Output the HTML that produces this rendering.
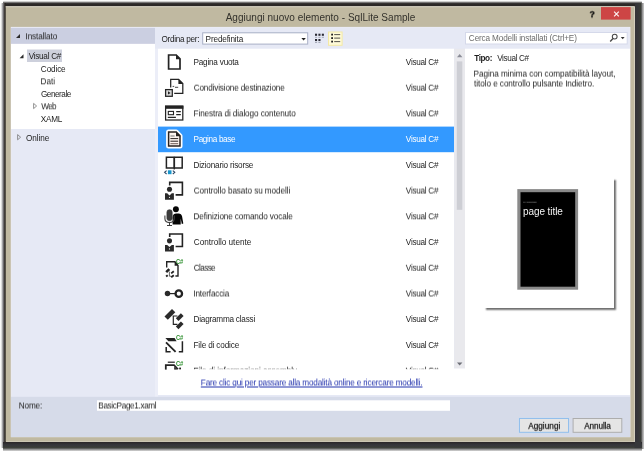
<!DOCTYPE html>
<html lang="it">
<head>
<meta charset="utf-8">
<title>Aggiungi nuovo elemento - SqlLite Sample</title>
<style>

*{box-sizing:border-box;margin:0;padding:0}
html,body{width:644px;height:451px;overflow:hidden;background:#fff}
body{position:relative;font-family:"Liberation Sans",sans-serif;font-size:8px;color:#1e1e1e}
.b{position:absolute}
.t{position:absolute;white-space:nowrap;display:block;transform-origin:0 0}
svg{position:absolute;overflow:visible}
#win{position:absolute;left:0;top:0;width:644px;height:451px;will-change:transform}

</style>
</head>
<body>
<div id="win">
<div class="b" style="left:2.6px;top:0px;width:639.0px;height:7px;background:linear-gradient(to bottom,#ffffff 0,#f4f5f4 1px,#a6a6a6 2px,#504e4e 2.9px,#322f2f 3.6px,#2a2726 4.6px,#2a2726 7px);border-radius:2px 2px 0 0"></div>
<div class="b" style="left:0px;top:2.6px;width:5.8px;height:445.8px;background:linear-gradient(to right,#ffffff 0,#f4f5f4 1px,#c4c4c4 2px,#85848a 3px,#54504f 4px,#2b2723 5px,#2b2723 5.8px);border-radius:2px 0 0 2px"></div>
<div class="b" style="left:634.6px;top:3.2px;width:9.4px;height:445.8px;background:linear-gradient(to right,#333337 0,#35363a 3px,#3a3d36 5.6px,#5e5e5e 6.6px,#a8a8a8 7.8px,#d2d2d2 9.4px);"></div>
<div class="b" style="left:3.2px;top:441.7px;width:639.2px;height:9.3px;background:linear-gradient(to bottom,#2a2627 0,#37373c 3px,#3a3d37 5.4px,#6a6a6a 6.8px,#b4b4b4 8px,#dadada 9.3px);"></div>
<svg width="644" height="451" viewBox="0 0 644 451" style="left:0;top:0"><rect x="634.6" y="441.7" width="6.6" height="6.3" fill="#36373a"/><rect x="5.7" y="6.2" width="629.0" height="435.6" fill="#c0b9a1"/><rect x="5.7" y="6.2" width="629.0" height="1.1" fill="#d2cec0"/><rect x="601" y="7.1" width="29.6" height="12.5" fill="#cd4545"/><rect x="11.3" y="27.4" width="618.6" height="409.3" fill="#e6e9f5" stroke="#edeef9" stroke-width="1"/><rect x="11" y="27.9" width="144" height="16.0" fill="#cbcfe1"/><rect x="11" y="43.9" width="144" height="85.1" fill="#ffffff"/><rect x="155" y="48.6" width="3" height="348.4" fill="#eceef8"/><rect x="27" y="49.5" width="35" height="12.5" fill="#cdd0dc"/><rect x="158" y="48.7" width="296" height="346.3" fill="#ffffff"/><rect x="158" y="126.6" width="296" height="25.6" fill="#3399ff"/><rect x="454.3" y="48.7" width="10.7" height="319.8" fill="#e9e9ed"/><rect x="456.8" y="61.4" width="5.5" height="148.4" fill="#cdced4"/><rect x="454" y="368.5" width="11" height="26.5" fill="#ffffff"/><rect x="465" y="48.7" width="165" height="346.3" fill="#ffffff"/><rect x="11" y="396.8" width="619" height="40.2" fill="#d6dbe9"/><rect x="97" y="400.3" width="353" height="10.5" fill="#ffffff"/><rect x="518.6" y="417.6" width="50.8" height="15.6" fill="#c9def3"/><rect x="519.5" y="418.5" width="49" height="13.8" fill="#e5e5e5" stroke="#93bfec" stroke-width="1"/><rect x="573.1" y="418.5" width="48.7" height="13.8" fill="#e5e5e5" stroke="#adadad" stroke-width="1"/><rect x="202.7" y="32.8" width="105.0" height="11.3" fill="#ffffff" stroke="#a8b0c6" stroke-width="1"/><rect x="465.5" y="32.5" width="161.7" height="11.5" fill="#ffffff" stroke="#d5d9ea" stroke-width="1"/><rect x="328.5" y="32.0" width="13.6" height="13.3" fill="#fefad9" stroke="#f4e9a4" stroke-width="1"/></svg>
<div class="b" style="left:483.5px;top:177.5px;width:130.1px;height:130.1px;background:#ffffff;box-shadow:2px 2px 1.6px 0 rgba(0,0,0,.55)"></div>
<svg width="644" height="451" viewBox="0 0 644 451" style="left:0;top:0"><rect x="517.3" y="189.1" width="60.8" height="100.6" fill="#8a8a8a"/><rect x="520.5" y="192.2" width="54.7" height="94.5" fill="#000000"/></svg>
<svg width="644" height="451" viewBox="0 0 644 451" style="left:0;top:0">
<path d="M168.6 55 H176.2 L180 58.9 V69 H168.6 Z" fill="none" stroke="#232323" stroke-width="1.7" />
<path d="M176 54.6 L180.6 59.3 H176 Z" fill="#232323" stroke="none" stroke-width="1.3" />
<path d="M170.7 87.6 V79.4 H178.6 L182.8 83.6 V93.3 H174.2" fill="none" stroke="#232323" stroke-width="1.25" />
<path d="M178.4 79 L183.2 83.9 H178.4 Z" fill="#232323" stroke="none" stroke-width="1.3" />
<path d="M172.6 86.4 h1.6 M175 87.3 h3.2" fill="none" stroke="#333" stroke-width="0.9" />
<rect x="165.6" y="89.6" width="6.7" height="6.7" fill="#d9d9d9" stroke="#232323" stroke-width="1.25" />
<path d="M168 91.2 L170.6 92.9 L168 94.6 Z" fill="#232323" stroke="none" stroke-width="1.3" />
<rect x="165.6" y="106.2" width="17.2" height="13.8" fill="#fff" stroke="#232323" stroke-width="1.25" />
<rect x="165" y="105.6" width="18.4" height="3.2" fill="#232323" stroke="none" stroke-width="0" />
<rect x="168.3" y="111.4" width="5.2" height="3.3" fill="#fff" stroke="#232323" stroke-width="1.1" />
<path d="M176.2 111.6 H180.8 M176.2 114.6 H180.8 M167.8 117.4 H175.9" fill="none" stroke="#232323" stroke-width="1.1" />
<path d="M168.6 132 H176.2 L180 135.9 V146 H168.6 Z" fill="#fff" stroke="#ffffff" stroke-width="5" stroke-linejoin="round"/>
<path d="M168.6 132 H176.2 L180 135.9 V146 H168.6 Z" fill="#fdf3ee" stroke="#2a2320" stroke-width="1.5" />
<path d="M176 131.6 L180.6 136.3 H176 Z" fill="#2a2320" stroke="none" stroke-width="1.3" />
<path d="M170.4 136 H174.6" fill="none" stroke="#8a8a8a" stroke-width="1.2" />
<path d="M170.4 138.6 H178.2 M170.4 141.2 H178.2" fill="none" stroke="#2a2320" stroke-width="1.0" />
<path d="M170.4 143.7 H178.2" fill="none" stroke="#6d5a55" stroke-width="1.0" />
<path d="M166.4 157.2 H174.3 V168.1 H166.4 Z M174.3 157.2 H182.2 V168.1 H174.3 Z" fill="none" stroke="#232323" stroke-width="1.5" />
<path d="M174.3 156.8 V169.4" fill="none" stroke="#232323" stroke-width="1.5" />
<rect x="167.9" y="170.3" width="3.6" height="3.9" fill="#1794cb" stroke="none" stroke-width="0" />
<path d="M166.6 170.6 L164.6 172.3 L166.6 174 M172.8 170.6 L174.8 172.3 L172.8 174" fill="none" stroke="#2d4866" stroke-width="1.1" />
<path d="M169.7 185.5 V182.4 H182.4 V194.9 H175.6" fill="none" stroke="#232323" stroke-width="1.6" />
<circle cx="169.5" cy="189.25" r="2.55" fill="#2b2b2b" stroke="none" stroke-width="0"/>
<path d="M165 193.3 H167.2 L169.5 195.4 L171.8 193.3 H173.9 V199.8 H165 Z" fill="#2b2b2b" stroke="none" stroke-width="1.3" />
<circle cx="169.5" cy="197.3" r="0.6" fill="#fff" stroke="none" stroke-width="0"/>
<path d="M169.7 237.1 V234.0 H182.4 V246.5 H175.6" fill="none" stroke="#232323" stroke-width="1.6" />
<circle cx="169.5" cy="240.85" r="2.55" fill="#2b2b2b" stroke="none" stroke-width="0"/>
<path d="M165 244.9 H167.2 L169.5 247.0 L171.8 244.9 H173.9 V251.4 H165 Z" fill="#2b2b2b" stroke="none" stroke-width="1.3" />
<circle cx="169.5" cy="248.9" r="0.6" fill="#fff" stroke="none" stroke-width="0"/>
<circle cx="175.9" cy="209.2" r="2.95" fill="#050505" stroke="none" stroke-width="0"/>
<path d="M172.6 224.4 V217.5 Q172.6 213.6 176.5 213.6 H178.6 Q181.4 213.6 182.1 216.6 L183.3 223.6 L181.8 224 L180.7 218.4 V224.4 Z" fill="#050505" stroke="none" stroke-width="1.3" />
<rect x="166.9" y="209.7" width="5.3" height="11.0" fill="#3c3c3c" stroke="#333" stroke-width="0.6" rx="2.4"/>
<path d="M164.9 215.6 V218.6 Q164.9 222.6 169.5 222.6 Q174.2 222.6 174.2 218.6 V215.6" fill="none" stroke="#444" stroke-width="1.1" />
<path d="M169.5 222.6 V225.3 M167 225.5 H172" fill="none" stroke="#3a3a3a" stroke-width="1.0" />
<path d="M166.7 267.4 V261.7 H174.9 L178 265.4 V276 H175.4" fill="none" stroke="#232323" stroke-width="1.4" />
<path d="M174.6 261.3 L178.4 265.8 H174.6 Z" fill="#232323" stroke="none" stroke-width="1.3" />
<path d="M165.3 271.3 L168.4 268.3 L170.2 270.1 L167.1 273.1 Z M170.6 272.7 L173.2 270.6 L174.4 272 L171.8 274.1 Z M170.6 276.6 L173.2 274.5 L174.4 275.9 L171.8 278 Z M165.5 275.7 l1.6 -1.2 l1.2 1.5 l-1.6 1.2 Z" fill="#232323" stroke="none" stroke-width="1.3" />
<path d="M169.4 271.6 V276.2 H171" fill="none" stroke="#232323" stroke-width="0.7" />
<text x="176.0" y="263.5" font-family="Liberation Sans, sans-serif" font-size="6.6" font-weight="bold" fill="#2f902f" textLength="7.3" lengthAdjust="spacingAndGlyphs">C#</text>
<circle cx="167.5" cy="293.6" r="2.75" fill="#2b2b2b" stroke="none" stroke-width="0"/>
<path d="M169.5 293.6 H175" fill="none" stroke="#232323" stroke-width="1.2" />
<circle cx="178.8" cy="293.7" r="3.25" fill="#fff" stroke="#232323" stroke-width="2.3"/>
<path d="M164.5 316.4 L172.0 308.9 L175.3 312.2 L167.8 319.7 Z" fill="#2b2b2b" stroke="none" stroke-width="1.3" />
<path d="M175.8 318.3 L180.9 313.2 L183.6 315.9 L178.5 321.0 Z" fill="#2b2b2b" stroke="none" stroke-width="1.3" />
<path d="M175.8 326.5 L180.9 321.4 L183.6 324.1 L178.5 329.2 Z" fill="#2b2b2b" stroke="none" stroke-width="1.3" />
<path d="M172.6 316 H177.4 M173.3 316 V324.3 H177.4" fill="none" stroke="#232323" stroke-width="1.15" />
<path d="M165.4 338.1 H174.6 L176.6 341.2 H168.4 Z" fill="#232323" stroke="none" stroke-width="1.3" />
<path d="M166 342.4 L175.6 351.8" fill="none" stroke="#232323" stroke-width="1.85" />
<path d="M166.2 347 V351.7 H170.6" fill="none" stroke="#232323" stroke-width="1.5" />
<path d="M182.4 341.2 V351.7 H178.8" fill="none" stroke="#232323" stroke-width="1.5" />
<text x="176.0" y="340.3" font-family="Liberation Sans, sans-serif" font-size="6.6" font-weight="bold" fill="#2f902f" textLength="7.3" lengthAdjust="spacingAndGlyphs">C#</text>
<path d="M167.8 362.2 H174.8" fill="none" stroke="#232323" stroke-width="1.2" />
<path d="M165.8 370 V365 H174 L178 369.4" fill="none" stroke="#232323" stroke-width="1.75" />
<path d="M174.2 366.6 L177.4 370 H174.2 Z" fill="#232323" stroke="none" stroke-width="1.3" />
<rect x="179.2" y="367.6" width="1.8" height="2.0" fill="#232323" stroke="none" stroke-width="0" />
<text x="176.0" y="366.1" font-family="Liberation Sans, sans-serif" font-size="6.6" font-weight="bold" fill="#2f902f" textLength="7.3" lengthAdjust="spacingAndGlyphs">C#</text>
<path d="M20 34 V38 H16 Z" fill="#2b2b2b" stroke="none" stroke-width="1.3" />
<path d="M23.5 54.3 V58.2 H19.6 Z" fill="#2b2b2b" stroke="none" stroke-width="1.3" />
<path d="M33.6 103.4 L36.6 106 L33.6 108.6 Z" fill="#fff" stroke="#777" stroke-width="0.8" />
<path d="M17.6 134.6 L20.6 137.2 L17.6 139.8 Z" fill="#e6e9f5" stroke="#777" stroke-width="0.8" />
<path d="M301.4 38 H305.8 L303.6 40.6 Z" fill="#222" stroke="none" stroke-width="1.3" />
<rect x="315" y="33.7" width="2.1" height="2.1" fill="#2a2a35" stroke="none" stroke-width="0" />
<rect x="315" y="36.9" width="2.1" height="0.6" fill="#7a7f90" stroke="none" stroke-width="0" />
<rect x="318.4" y="33.7" width="2.1" height="2.1" fill="#2a2a35" stroke="none" stroke-width="0" />
<rect x="318.4" y="36.9" width="2.1" height="0.6" fill="#7a7f90" stroke="none" stroke-width="0" />
<rect x="321.8" y="33.7" width="2.1" height="2.1" fill="#2a2a35" stroke="none" stroke-width="0" />
<rect x="321.8" y="36.9" width="2.1" height="0.6" fill="#7a7f90" stroke="none" stroke-width="0" />
<rect x="315" y="39" width="2.1" height="2.1" fill="#2a2a35" stroke="none" stroke-width="0" />
<rect x="315" y="42.2" width="2.1" height="0.6" fill="#7a7f90" stroke="none" stroke-width="0" />
<rect x="318.4" y="39" width="2.1" height="2.1" fill="#2a2a35" stroke="none" stroke-width="0" />
<rect x="318.4" y="42.2" width="2.1" height="0.6" fill="#7a7f90" stroke="none" stroke-width="0" />
<rect x="331.2" y="33.7" width="1.8" height="1.8" fill="#1e1e1e" stroke="none" stroke-width="0" />
<rect x="334.2" y="34.1" width="6.0" height="1.0" fill="#55534a" stroke="none" stroke-width="0" />
<rect x="331.2" y="37.2" width="1.8" height="1.8" fill="#1e1e1e" stroke="none" stroke-width="0" />
<rect x="334.2" y="37.6" width="6.0" height="1.0" fill="#55534a" stroke="none" stroke-width="0" />
<rect x="331.2" y="40.7" width="1.8" height="1.8" fill="#1e1e1e" stroke="none" stroke-width="0" />
<rect x="334.2" y="41.1" width="6.0" height="1.0" fill="#55534a" stroke="none" stroke-width="0" />
<circle cx="614.7" cy="36.6" r="2.4" fill="#fff" stroke="#474747" stroke-width="1.05"/>
<path d="M613 38.5 L610.2 41.5" fill="none" stroke="#474747" stroke-width="1.45" />
<path d="M620.8 37.1 H624.6 L622.7 39.3 Z" fill="#333" stroke="none" stroke-width="1.3" />
<path d="M457 57.2 L459.7 54 L462.4 57.2 Z" fill="#8a8c96" stroke="none" stroke-width="1.3" />
<path d="M457 362.4 L459.7 365.6 L462.4 362.4 Z" fill="#6e7078" stroke="none" stroke-width="1.3" />
<path d="M614.1 11.6 L618.8 16.3 M618.8 11.6 L614.1 16.3" fill="none" stroke="#fdf3f3" stroke-width="1.2" />
</svg>
<div class="t" style="left:193px;top:58px;text-indent:0.52px;font-size:8.2px;line-height:10.25px;letter-spacing:-0.217px;">Pagina vuota</div>
<div class="t" style="left:405px;top:58px;text-indent:0.85px;font-size:8.2px;line-height:10.25px;letter-spacing:-0.281px;">Visual C#</div>
<div class="t" style="left:193px;top:82px;text-indent:0.76px;transform:translate3d(0,1.63px,0) rotateX(0.01deg);font-size:8.2px;line-height:10.25px;letter-spacing:-0.172px;">Condivisione destinazione</div>
<div class="t" style="left:405px;top:82px;text-indent:0.85px;transform:translate3d(0,1.63px,0) rotateX(0.01deg);font-size:8.2px;line-height:10.25px;letter-spacing:-0.281px;">Visual C#</div>
<div class="t" style="left:193px;top:108px;text-indent:0.52px;transform:translate3d(0,1.36px,0) rotateX(0.01deg);font-size:8.2px;line-height:10.25px;letter-spacing:-0.103px;">Finestra di dialogo contenuto</div>
<div class="t" style="left:405px;top:108px;text-indent:0.85px;transform:translate3d(0,1.36px,0) rotateX(0.01deg);font-size:8.2px;line-height:10.25px;letter-spacing:-0.281px;">Visual C#</div>
<div class="t" style="left:193px;top:135px;text-indent:0.52px;font-size:8.2px;line-height:10.25px;letter-spacing:-0.344px;color:#fff;">Pagina base</div>
<div class="t" style="left:405px;top:135px;text-indent:0.85px;font-size:8.2px;line-height:10.25px;letter-spacing:-0.281px;color:#fff;">Visual C#</div>
<div class="t" style="left:193px;top:161px;text-indent:0.52px;font-size:8.2px;line-height:10.25px;letter-spacing:-0.198px;">Dizionario risorse</div>
<div class="t" style="left:405px;top:161px;text-indent:0.85px;font-size:8.2px;line-height:10.25px;letter-spacing:-0.281px;">Visual C#</div>
<div class="t" style="left:193px;top:185px;text-indent:0.76px;transform:translate3d(0,1.55px,0) rotateX(0.01deg);font-size:8.2px;line-height:10.25px;letter-spacing:-0.088px;">Controllo basato su modelli</div>
<div class="t" style="left:405px;top:185px;text-indent:0.85px;transform:translate3d(0,1.55px,0) rotateX(0.01deg);font-size:8.2px;line-height:10.25px;letter-spacing:-0.281px;">Visual C#</div>
<div class="t" style="left:193px;top:211px;text-indent:0.52px;transform:translate3d(0,1.28px,0) rotateX(0.01deg);font-size:8.2px;line-height:10.25px;letter-spacing:-0.123px;">Definizione comando vocale</div>
<div class="t" style="left:405px;top:211px;text-indent:0.85px;transform:translate3d(0,1.28px,0) rotateX(0.01deg);font-size:8.2px;line-height:10.25px;letter-spacing:-0.281px;">Visual C#</div>
<div class="t" style="left:193px;top:238px;text-indent:0.76px;font-size:8.2px;line-height:10.25px;letter-spacing:-0.020px;">Controllo utente</div>
<div class="t" style="left:405px;top:238px;text-indent:0.85px;font-size:8.2px;line-height:10.25px;letter-spacing:-0.281px;">Visual C#</div>
<div class="t" style="left:193px;top:262px;text-indent:0.76px;transform:translate3d(0,1.74px,0) rotateX(0.01deg);font-size:8.2px;line-height:10.25px;letter-spacing:-0.626px;">Classe</div>
<div class="t" style="left:405px;top:262px;text-indent:0.85px;transform:translate3d(0,1.74px,0) rotateX(0.01deg);font-size:8.2px;line-height:10.25px;letter-spacing:-0.281px;">Visual C#</div>
<div class="t" style="left:193px;top:288px;text-indent:0.43px;transform:translate3d(0,1.47px,0) rotateX(0.01deg);font-size:8.2px;line-height:10.25px;letter-spacing:-0.189px;">Interfaccia</div>
<div class="t" style="left:405px;top:288px;text-indent:0.85px;transform:translate3d(0,1.47px,0) rotateX(0.01deg);font-size:8.2px;line-height:10.25px;letter-spacing:-0.281px;">Visual C#</div>
<div class="t" style="left:193px;top:315px;text-indent:0.52px;font-size:8.2px;line-height:10.25px;letter-spacing:-0.225px;">Diagramma classi</div>
<div class="t" style="left:405px;top:315px;text-indent:0.85px;font-size:8.2px;line-height:10.25px;letter-spacing:-0.281px;">Visual C#</div>
<div class="t" style="left:193px;top:341px;text-indent:0.52px;font-size:8.2px;line-height:10.25px;letter-spacing:-0.158px;">File di codice</div>
<div class="t" style="left:405px;top:341px;text-indent:0.85px;font-size:8.2px;line-height:10.25px;letter-spacing:-0.281px;">Visual C#</div>
<div class="t" style="left:193px;top:365px;text-indent:0.52px;transform:translate3d(0,1.66px,0) rotateX(0.01deg);font-size:8.2px;line-height:10.25px;letter-spacing:-0.052px;">File di informazioni assembly</div>
<div class="t" style="left:405px;top:365px;text-indent:0.85px;transform:translate3d(0,1.66px,0) rotateX(0.01deg);font-size:8.2px;line-height:10.25px;letter-spacing:-0.281px;">Visual C#</div>
<svg width="644" height="451" viewBox="0 0 644 451" style="left:0;top:0"><rect x="158" y="369.6" width="32" height="8.9" fill="#ffffff"/><rect x="190" y="369.2" width="264" height="9.3" fill="#ffffff"/></svg>
<div class="t" style="left:225px;top:12px;text-indent:0.70px;font-size:10px;line-height:12.5px;letter-spacing:0.017px;color:#33322c">Aggiungi nuovo elemento - SqlLite Sample</div>
<div class="t" style="left:589px;top:8px;text-indent:0.59px;transform:translate3d(0,1.30px,0) rotateX(0.01deg);font-size:8.8px;line-height:11.0px;letter-spacing:0.000px;font-weight:bold;color:#0c0c0c;-webkit-text-stroke:0.3px #0c0c0c">?</div>
<div class="t" style="left:25px;top:31px;text-indent:0.53px;transform:translate3d(0,1.30px,0) rotateX(0.01deg);font-size:8.2px;line-height:10.25px;letter-spacing:-0.119px;color:#1e1e1e">Installato</div>
<div class="t" style="left:28px;top:52px;text-indent:0.65px;font-size:8.2px;line-height:10.25px;letter-spacing:-0.268px;">Visual C#</div>
<div class="t" style="left:40px;top:65px;text-indent:0.86px;font-size:8.2px;line-height:10.25px;letter-spacing:-0.135px;">Codice</div>
<div class="t" style="left:40px;top:76px;text-indent:0.62px;transform:translate3d(0,1.30px,0) rotateX(0.01deg);font-size:8.2px;line-height:10.25px;letter-spacing:-0.005px;">Dati</div>
<div class="t" style="left:40px;top:90px;text-indent:0.88px;font-size:8.2px;line-height:10.25px;letter-spacing:-0.459px;">Generale</div>
<div class="t" style="left:41px;top:101px;text-indent:0.20px;transform:translate3d(0,1.30px,0) rotateX(0.01deg);font-size:8.2px;line-height:10.25px;letter-spacing:-0.612px;">Web</div>
<div class="t" style="left:40px;top:115px;text-indent:0.78px;font-size:8.2px;line-height:10.25px;letter-spacing:-0.245px;">XAML</div>
<div class="t" style="left:25px;top:134px;text-indent:0.90px;font-size:8.2px;line-height:10.25px;letter-spacing:-0.043px;">Online</div>
<div class="t" style="left:161px;top:35px;text-indent:0.40px;font-size:8.2px;line-height:10.25px;letter-spacing:-0.276px;">Ordina per:</div>
<div class="t" style="left:205px;top:35px;text-indent:0.62px;font-size:8.2px;line-height:10.25px;letter-spacing:-0.157px;">Predefinita</div>
<div class="t" style="left:468px;top:34px;text-indent:0.86px;font-size:8.2px;line-height:10.25px;letter-spacing:-0.144px;color:#6c6c6c">Cerca Modelli installati (Ctrl+E)</div>
<a class="t" style="left:200px;top:377px;text-indent:0.82px;transform:translate3d(0,1.50px,0) rotateX(0.01deg);font-size:8.2px;line-height:10.25px;letter-spacing:-0.176px;color:#2333ad;text-decoration:underline">Fare clic qui per passare alla modalità online e ricercare modelli.</a>
<div class="t" style="left:474px;top:54px;text-indent:0.20px;font-size:8.2px;line-height:10.25px;letter-spacing:-0.411px;font-weight:bold">Tipo:</div>
<div class="t" style="left:497px;top:54px;text-indent:0.15px;font-size:8.2px;line-height:10.25px;letter-spacing:-0.368px;">Visual C#</div>
<div class="t" style="left:473px;top:68px;text-indent:0.62px;transform:translate3d(0,1.60px,0) rotateX(0.01deg);font-size:8.2px;line-height:10.25px;letter-spacing:-0.051px;">Pagina minima con compatibilità layout,</div>
<div class="t" style="left:473px;top:78px;text-indent:1.00px;transform:translate3d(0,1.50px,0) rotateX(0.01deg);font-size:8.2px;line-height:10.25px;letter-spacing:-0.061px;">titolo e controllo pulsante Indietro.</div>
<div class="t" style="left:18px;top:400px;text-indent:0.82px;transform:translate3d(0,1.50px,0) rotateX(0.01deg);font-size:8.2px;line-height:10.25px;letter-spacing:-0.171px;">Nome:</div>
<div class="t" style="left:98px;top:400px;text-indent:0.32px;transform:translate3d(0,1.50px,0) rotateX(0.01deg);font-size:8.2px;line-height:10.25px;letter-spacing:-0.352px;">BasicPage1.xaml</div>
<div class="t" style="left:528px;top:420px;text-indent:0.20px;transform:translate3d(0,1.80px,0) rotateX(0.01deg);font-size:8.2px;line-height:10.25px;letter-spacing:0.033px;color:#111;-webkit-text-stroke:0.25px #222">Aggiungi</div>
<div class="t" style="left:584px;top:420px;text-indent:0.20px;transform:translate3d(0,1.80px,0) rotateX(0.01deg);font-size:8.2px;line-height:10.25px;letter-spacing:-0.102px;color:#111;-webkit-text-stroke:0.25px #222">Annulla</div>
<div class="t" style="left:522px;top:206px;text-indent:0.93px;font-size:10px;line-height:12.5px;letter-spacing:-0.070px;color:#f4f4f4">page title</div>
<div class="t" style="left:523px;top:200px;text-indent:0.05px;transform:translate3d(0,0.70px,0) rotateX(0.01deg);font-size:2.2px;line-height:2.75px;letter-spacing:-0.352px;color:#a8a8a8">MY APPLICATION</div>
</div>
</body>
</html>
